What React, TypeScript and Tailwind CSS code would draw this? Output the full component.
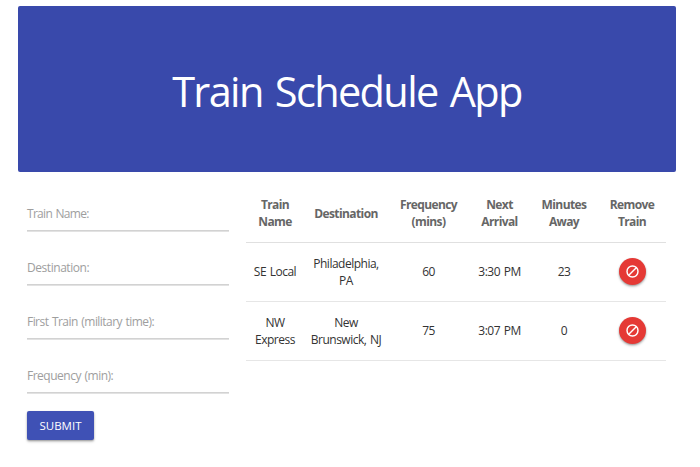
import React from "react";

const fields = [
  { label: "Train Name:", tracking: "tracking-[-0.7px]" },
  { label: "Destination:", tracking: "tracking-[-0.45px]" },
  { label: "First Train (military time):", tracking: "tracking-[-0.55px]" },
  { label: "Frequency (min):", tracking: "tracking-[-0.5px]" },
];

const columns = [
  { lines: ["Train", "Name"], width: "w-[58px]" },
  { lines: ["Destination"], width: "w-[84px]" },
  { lines: ["Frequency", "(mins)"], width: "w-[81px]" },
  { lines: ["Next", "Arrival"], width: "w-[61px]" },
  { lines: ["Minutes", "Away"], width: "w-[68px]" },
  { lines: ["Remove", "Train"], width: "w-[68px]" },
];

const trains = [
  [["SE Local"], ["Philadelphia,", "PA"], ["60"], ["3:30 PM"], ["23"]],
  [["NW", "Express"], ["New", "Brunswick, NJ"], ["75"], ["3:07 PM"], ["0"]],
];

function Lines({ lines }: { lines: string[] }) {
  return (
    <>
      {lines.map((line) => (
        <span key={line} className="block whitespace-nowrap">
          {line}
        </span>
      ))}
    </>
  );
}

function RemoveButton() {
  return (
    <button
      aria-label="Remove train"
      className="mx-auto flex size-[27px] items-center justify-center rounded-full bg-[#e53935] shadow-[0_1px_2px_rgba(0,0,0,0.3),0_2px_3px_rgba(0,0,0,0.14)]"
    >
      <svg viewBox="0 0 24 24" className="size-[15px]" fill="none" stroke="#fff" strokeWidth="2.3">
        <circle cx="12" cy="12" r="8.8" />
        <path d="M6 18 18 6" />
      </svg>
    </button>
  );
}

export default function App() {
  return (
    <div className="h-[467px] w-[700px] overflow-hidden bg-white pt-[5.5px] pl-[18px] font-['Open_Sans','Noto_Sans',sans-serif] text-[12px]">
      <header className="flex h-[166px] w-[658px] items-center justify-center rounded-[2px] bg-[#3949ab]">
        <h1 className="pt-[4px] text-[41.5px] leading-[56px] tracking-[-1.65px] whitespace-nowrap text-white [word-spacing:3px]">
          Train Schedule App
        </h1>
      </header>
      <main className="flex pt-[16.5px] pl-[9px]">
        <form className="w-[202px] shrink-0">
          {fields.map(({ label, tracking }) => (
            <div key={label} className="flex h-[54px] flex-col">
              <label
                className={`h-[42px] pt-[17px] leading-[17px] whitespace-nowrap text-[#9e9e9e] [word-spacing:1px] ${tracking}`}
              >
                {label}
              </label>
              <div className="h-[2px] border-t border-[#d2d2d2] bg-[#e2e2e2]" />
            </div>
          ))}
          <button
            type="button"
            className="mt-[7px] flex h-[29px] w-[67px] items-center justify-center rounded-[2px] bg-[#3f51b5] text-[11.5px] leading-[16px] text-white shadow-[0_1px_2px_rgba(0,0,0,0.3),0_2px_3px_rgba(0,0,0,0.14)]"
          >
            SUBMIT
          </button>
        </form>
        <table className="ml-[17px] h-[172px] w-[420px] table-fixed border-collapse text-center leading-[17px]">
          <thead>
            <tr className="h-[54px] border-b border-[#e0e0e0]">
              {columns.map((column) => (
                <th
                  key={column.lines.join(" ")}
                  className={`p-0 pb-[3px] font-bold tracking-[-0.6px] text-[#666] ${column.width}`}
                >
                  <Lines lines={column.lines} />
                </th>
              ))}
            </tr>
          </thead>
          <tbody>
            {trains.map((train) => (
              <tr key={train[0].join(" ")} className="h-[59px] border-b border-[#e6e6e6]">
                {train.map((cell) => (
                  <td key={cell.join(" ")} className="p-0 tracking-[-0.5px] text-[#333] [word-spacing:1px]">
                    <Lines lines={cell} />
                  </td>
                ))}
                <td className="p-0">
                  <RemoveButton />
                </td>
              </tr>
            ))}
          </tbody>
        </table>
      </main>
    </div>
  );
}
